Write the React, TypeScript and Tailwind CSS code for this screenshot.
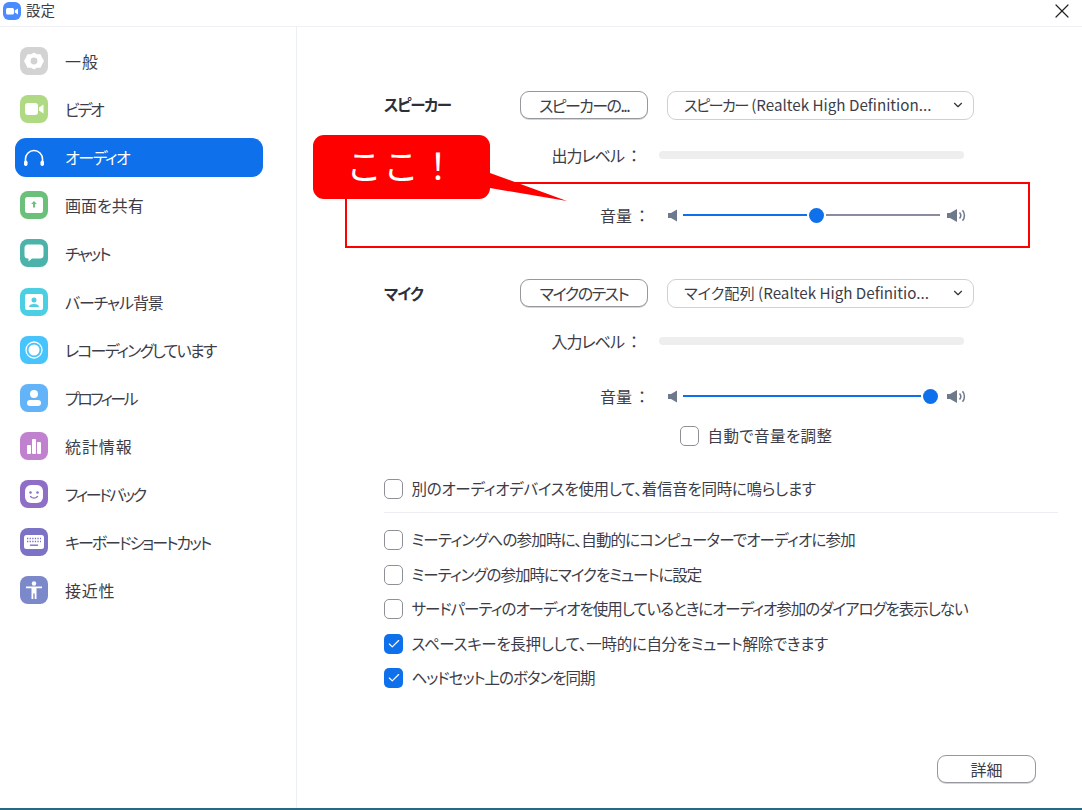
import React from "react";
import { ChevronDown, X, Check } from "lucide-react";

const Gear = () => (
  <svg viewBox="0 0 28 28" className="w-7 h-7" fill="none">
    <path d="M14 6.500l2.500 1.500 3.500-.1 1.300 2.600 1.900 3.500-1.900 3.500-1.300 2.600-3.500-.1-2.500 1.500-2.500-1.500-3.500.1-1.300-2.600L4.800 14l1.900-3.500 1.300-2.600 3.500.1z" fill="#fff" stroke="#fff" strokeWidth="1.500" strokeLinejoin="round" />
    <circle cx="14" cy="14" r="3.400" fill="#d2d2d2" />
  </svg>
);
const Video = () => (
  <svg viewBox="0 0 28 28" className="w-7 h-7">
    <rect x="5" y="8" width="13" height="12" rx="3" fill="#fff" />
    <path d="M19 12.500l4.500-3v9l-4.500-3z" fill="#fff" />
  </svg>
);
const Phones = () => (
  <svg viewBox="0 0 28 28" className="w-7 h-7" fill="none">
    <path d="M5.500 20v-4a8.500 8.500 0 0 1 17 0v4" stroke="#fff" strokeWidth="1.600" />
    <rect x="4" y="17.500" width="3.500" height="5.500" rx="1.700" fill="#fff" />
    <rect x="20.500" y="17.500" width="3.500" height="5.500" rx="1.700" fill="#fff" />
  </svg>
);
const Share = () => (
  <svg viewBox="0 0 28 28" className="w-7 h-7">
    <rect x="5" y="6" width="18" height="16" rx="2.500" fill="#fff" />
    <path d="M14 10l3 3h-2v3.500h-2V13h-2z" fill="#6cc17a" />
  </svg>
);
const Chat = () => (
  <svg viewBox="0 0 28 28" className="w-7 h-7">
    <path d="M8 5.500h12a3.500 3.500 0 0 1 3.500 3.500v7a3.500 3.500 0 0 1-3.500 3.500h-8l-3.500 3v-3H8A3.500 3.500 0 0 1 4.500 16V9A3.500 3.500 0 0 1 8 5.500z" fill="#fff" />
  </svg>
);
const Backdrop = () => (
  <svg viewBox="0 0 28 28" className="w-7 h-7">
    <rect x="5" y="6" width="18" height="16" rx="2" fill="#fff" />
    <circle cx="14" cy="12" r="2.500" fill="#4ccfe3" />
    <path d="M9 19c0-2 2-3 5-3s5 1 5 3z" fill="#4ccfe3" />
  </svg>
);
const Rec = () => (
  <svg viewBox="0 0 28 28" className="w-7 h-7" fill="none">
    <circle cx="14" cy="14" r="8" stroke="#fff" strokeWidth="1.300" />
    <circle cx="14" cy="14" r="5.500" fill="#fff" />
  </svg>
);
const Person = () => (
  <svg viewBox="0 0 28 28" className="w-7 h-7">
    <circle cx="14" cy="10" r="4" fill="#fff" />
    <rect x="7" y="16" width="14" height="6" rx="3" fill="#fff" />
  </svg>
);
const Stats = () => (
  <svg viewBox="0 0 28 28" className="w-7 h-7">
    <rect x="7" y="13" width="4" height="9" rx="1" fill="#fff" />
    <rect x="12" y="7" width="4" height="15" rx="1" fill="#fff" />
    <rect x="17" y="10" width="4" height="12" rx="1" fill="#fff" />
  </svg>
);
const Smile = () => (
  <svg viewBox="0 0 28 28" className="w-7 h-7">
    <rect x="5" y="5" width="18" height="18" rx="6" fill="#fff" />
    <circle cx="10.500" cy="12.500" r="1.300" fill="#8f6fc6" />
    <circle cx="17.500" cy="12.500" r="1.300" fill="#8f6fc6" />
    <path d="M10.500 16.500c2 2 5 2 7 0" stroke="#8f6fc6" strokeWidth="1.300" fill="none" strokeLinecap="round" />
  </svg>
);
const Keyboard = () => (
  <svg viewBox="0 0 28 28" className="w-7 h-7">
    <rect x="4" y="7" width="20" height="14" rx="2.500" fill="#fff" />
    <path d="M7 10.500h14M7 13.500h14" stroke="#7d73c6" strokeWidth="1.300" strokeDasharray="1.300 1.300" />
    <rect x="10" y="16.500" width="8" height="1.400" fill="#7d73c6" />
  </svg>
);
const Access = () => (
  <svg viewBox="0 0 28 28" className="w-7 h-7">
    <circle cx="14" cy="7.500" r="2.200" fill="#fff" />
    <path d="M6 10.500h16v1.800h-5.500V23h-1.800v-5.500h-1.400V23h-1.800V12.300H6z" fill="#fff" />
  </svg>
);

const items: { label: string; color: string; track: string; icon: React.ReactNode; active?: boolean }[] = [
  { label: "一般", color: "bg-[#d3d3d3]", track: "tracking-[1px]", icon: <Gear /> },
  { label: "ビデオ", color: "bg-[#b0d984]", track: "tracking-[-2.3px]", icon: <Video /> },
  { label: "オーディオ", color: "", track: "tracking-[-1.4px]", icon: <Phones />, active: true },
  { label: "画面を共有", color: "bg-[#6cc17a]", track: "tracking-[0px]", icon: <Share /> },
  { label: "チャット", color: "bg-[#4bb3a9]", track: "tracking-[-2px]", icon: <Chat /> },
  { label: "バーチャル背景", color: "bg-[#4ccfe3]", track: "tracking-[-1.1px]", icon: <Backdrop /> },
  { label: "レコーディングしています", color: "bg-[#47c4fb]", track: "tracking-[-1.8px]", icon: <Rec /> },
  { label: "プロフィール", color: "bg-[#62b3f8]", track: "tracking-[-2.6px]", icon: <Person /> },
  { label: "統計情報", color: "bg-[#c081cf]", track: "tracking-[0.9px]", icon: <Stats /> },
  { label: "フィードバック", color: "bg-[#8f6fc6]", track: "tracking-[-2.3px]", icon: <Smile /> },
  { label: "キーボードショートカット", color: "bg-[#7d73c6]", track: "tracking-[-2px]", icon: <Keyboard /> },
  { label: "接近性", color: "bg-[#7b88ca]", track: "tracking-[0.8px]", icon: <Access /> },
];

const SpeakerLow = () => (
  <svg viewBox="0 0 12 14" className="w-3 h-[15px] shrink-0">
    <path d="M1 4.500h3L10 1v12L4 9.500H1z" fill="#6e7a8c" />
  </svg>
);
const SpeakerHigh = () => (
  <svg viewBox="0 0 19 14" className="w-[19px] h-[15px] shrink-0" fill="none">
    <path d="M0 4.500h3L10 .5v13L3 9.500H0z" fill="#6e7a8c" />
    <path d="M12.500 4a4.500 4.500 0 0 1 0 6M15.500 1.800a8 8 0 0 1 0 10.400" stroke="#6e7a8c" strokeWidth="1.500" />
  </svg>
);

const Slider = ({ value, track }: { value: number; track: number }) => (
  <div className="ml-[18px] flex items-center h-5">
    <SpeakerLow />
    <div className="ml-[4px] w-[257px] flex items-center">
      <div className="h-[2px] bg-[#0e71eb]" style={{ width: value }} />
      <div className="w-[15px] h-[15px] rounded-full bg-[#0e71eb] shrink-0 mx-[2px]" />
      {track > 0 && <div className="h-[2px] bg-[#8b8b9f]" style={{ width: track }} />}
    </div>
    <div className="ml-[7px]">
      <SpeakerHigh />
    </div>
  </div>
);

const Box = ({ checked }: { checked?: boolean }) =>
  checked ? (
    <span className="w-[19px] h-[20px] shrink-0 rounded-[5px] bg-[#0e71eb] flex items-center justify-center">
      <Check size={14} color="#fff" strokeWidth={2} />
    </span>
  ) : (
    <span className="w-[19px] h-[20px] shrink-0 rounded-[5px] border-[1.5px] border-[#8f8f96] bg-white" />
  );

const CheckRow = ({ label, checked, className, track }: { label: string; checked?: boolean; className: string; track: string }) => (
  <div className={`flex items-center h-5 gap-[9px] ${className}`}>
    <Box checked={checked} />
    <span className={`text-[15.5px] leading-5 mb-[2px] -ml-[0.5px] text-[#3d3d48] whitespace-nowrap ${track}`}>{label}</span>
  </div>
);

const Btn = ({ children, w }: { children: React.ReactNode; w: string }) => (
  <button className={`${w} h-7 rounded-[9px] border border-[#97979e] text-[16px] leading-none text-[#3d3d48] bg-white shadow-[0_1px_0_#d5d5d8]`}>
    {children}
  </button>
);

const Select = ({ kana, latin, track }: { kana: string; latin: string; track: string }) => (
  <div className="ml-[19px] w-[307px] h-[29px] rounded-[9px] border border-[#cfcfdc] flex items-center pl-[16px] pr-[8px] justify-between">
    <span className="text-[15.2px] leading-none text-[#3d3d48] whitespace-nowrap">
      <span className={track}>{kana}</span> {latin}
    </span>
    <ChevronDown size={14} color="#33333d" strokeWidth={2} />
  </div>
);

const Label = ({ children, w, end }: { children: React.ReactNode; w: string; end: string }) => (
  <div className={`${w} text-right text-[16px] leading-5 text-[#3d3d48] whitespace-nowrap shrink-0`}>
    {children}
    <span className={`ml-[6px] ${end}`}>：</span>
  </div>
);

const Level = () => <div className="ml-[21px] w-[305px] h-2 rounded-full bg-[#eeeeee]" />;

export default function App() {
  return (
    <div
      className="relative w-[1082px] h-[810px] bg-white overflow-hidden flex flex-col [font-feature-settings:'palt']"
      style={{ fontFamily: '"Noto Sans CJK JP", "Noto Sans", sans-serif' }}
    >
      <header className="h-[27px] shrink-0 flex items-center border-b border-[#f0f0f5] pl-[3px] pr-[8px]">
        <div className="w-[18px] h-[18px] rounded-[6px] bg-[#4a8cff] flex items-center justify-center -mt-[5px]">
          <svg viewBox="0 0 14 14" className="w-3.5 h-3.5">
            <rect x="1" y="4" width="8" height="6.500" rx="1.500" fill="#fff" />
            <path d="M9.800 6.500L13 4.500v6l-3.200-2z" fill="#fff" />
          </svg>
        </div>
        <span className="ml-[5px] text-[14.5px] leading-none text-[#3d3d48] -mt-[5px]">設定</span>
        <X className="ml-auto -mt-[5px]" size={24} color="#222" strokeWidth={1.200} />
      </header>

      <div className="flex-1 flex min-h-0">
        <nav className="w-[297px] shrink-0 border-r border-[#edeff7] pt-[14.4px] pl-[15px]">
          {items.map((it) => (
            <div key={it.label} className={`w-[248px] h-[39px] mb-[9.15px] flex items-center rounded-[11px] ${it.active ? "bg-[#0e71eb]" : ""}`}>
              <div className={`ml-[5px] w-7 h-7 rounded-[8px] flex items-center justify-center ${it.color}`}>{it.icon}</div>
              <span className={`ml-[17px] text-[16px] leading-none whitespace-nowrap ${it.track} ${it.active ? "text-white" : "text-[#3d3d48]"}`}>{it.label}</span>
            </div>
          ))}
        </nav>

        <main className="flex-1 min-w-0 pt-[64px] pl-[87px] pr-[24px] pb-[24px] flex flex-col">
          <div className="flex items-center h-7">
            <div className="w-[136px] text-[15.5px] font-bold leading-5 text-[#2f2f38] tracking-[-1.4px] mb-[2px]">スピーカー</div>
            <Btn w="w-[128px] tracking-[-1.6px]">スピーカーの...</Btn>
            <Select track="tracking-[-1.6px]" kana="スピーカー" latin="(Realtek High Definition..." />
          </div>
          <div className="flex items-center h-5 mt-[26px]">
            <Label w="w-[254px] tracking-[-1px]" end="mr-[1px]">出力レベル</Label>
            <Level />
          </div>
          <div className="flex items-center h-5 mt-[40px]">
            <Label w="w-[265px]" end="mr-[3px]">音量</Label>
            <Slider value={124} track={114} />
          </div>
          <div className="flex items-center h-7 mt-[54px]">
            <div className="w-[136px] text-[15.5px] font-bold leading-5 text-[#2f2f38] tracking-[-1px]">マイク</div>
            <Btn w="w-[128px] tracking-[-1.5px]">マイクのテスト</Btn>
            <Select track="tracking-[0px]" kana="マイク配列" latin="(Realtek High Definitio..." />
          </div>
          <div className="flex items-center h-5 mt-[24px]">
            <Label w="w-[254px] tracking-[-1px]" end="mr-[1px]">入力レベル</Label>
            <Level />
          </div>
          <div className="flex items-center h-5 mt-[35px]">
            <Label w="w-[265px]" end="mr-[3px]">音量</Label>
            <Slider value={238} track={0} />
          </div>
          <CheckRow className="mt-[20px] ml-[296px]" track="tracking-[0.4px]" label="自動で音量を調整" />
          <CheckRow className="mt-[33px]" track="tracking-[-0.28px]" label="別のオーディオデバイスを使用して、着信音を同時に鳴らします" />
          <div className="mt-[13px] h-px bg-[#eeeef2] w-[674px]" />
          <CheckRow className="mt-[17px]" track="tracking-[-0.82px]" label="ミーティングへの参加時に、自動的にコンピューターでオーディオに参加" />
          <CheckRow className="mt-[14.5px]" track="tracking-[-1px]" label="ミーティングの参加時にマイクをミュートに設定" />
          <CheckRow className="mt-[14.5px]" track="tracking-[-1.02px]" label="サードパーティのオーディオを使用しているときにオーディオ参加のダイアログを表示しない" />
          <CheckRow className="mt-[14.5px]" track="tracking-[-0.33px]" checked label="スペースキーを長押しして、一時的に自分をミュート解除できます" />
          <CheckRow className="mt-[14.5px]" track="tracking-[-1px]" checked label="ヘッドセット上のボタンを同期" />
          <div className="mt-auto self-end mr-[22px] mb-[1px]">
            <Btn w="w-[99px]">詳細</Btn>
          </div>
        </main>
      </div>
      <div className="h-[2px] shrink-0 bg-[#256a80]" />

      {/* annotation drawn over the dialog */}
      <div className="absolute left-[345px] top-[182px] w-[685px] h-[66px] border-2 border-[#ff0000]" />
      <svg className="absolute left-[480px] top-[165px] w-[90px] h-[40px]" viewBox="0 0 90 40">
        <polygon points="10,8 87,36 10,23" fill="#ff0000" />
      </svg>
      <div className="absolute left-[313px] top-[135px] w-[177px] h-[64px] rounded-[11px] bg-[#ff0000] flex items-center pl-[33px] pb-[6px] text-[36px] leading-none text-white tracking-[1px] [font-feature-settings:normal]">
        ここ！
      </div>
    </div>
  );
}
